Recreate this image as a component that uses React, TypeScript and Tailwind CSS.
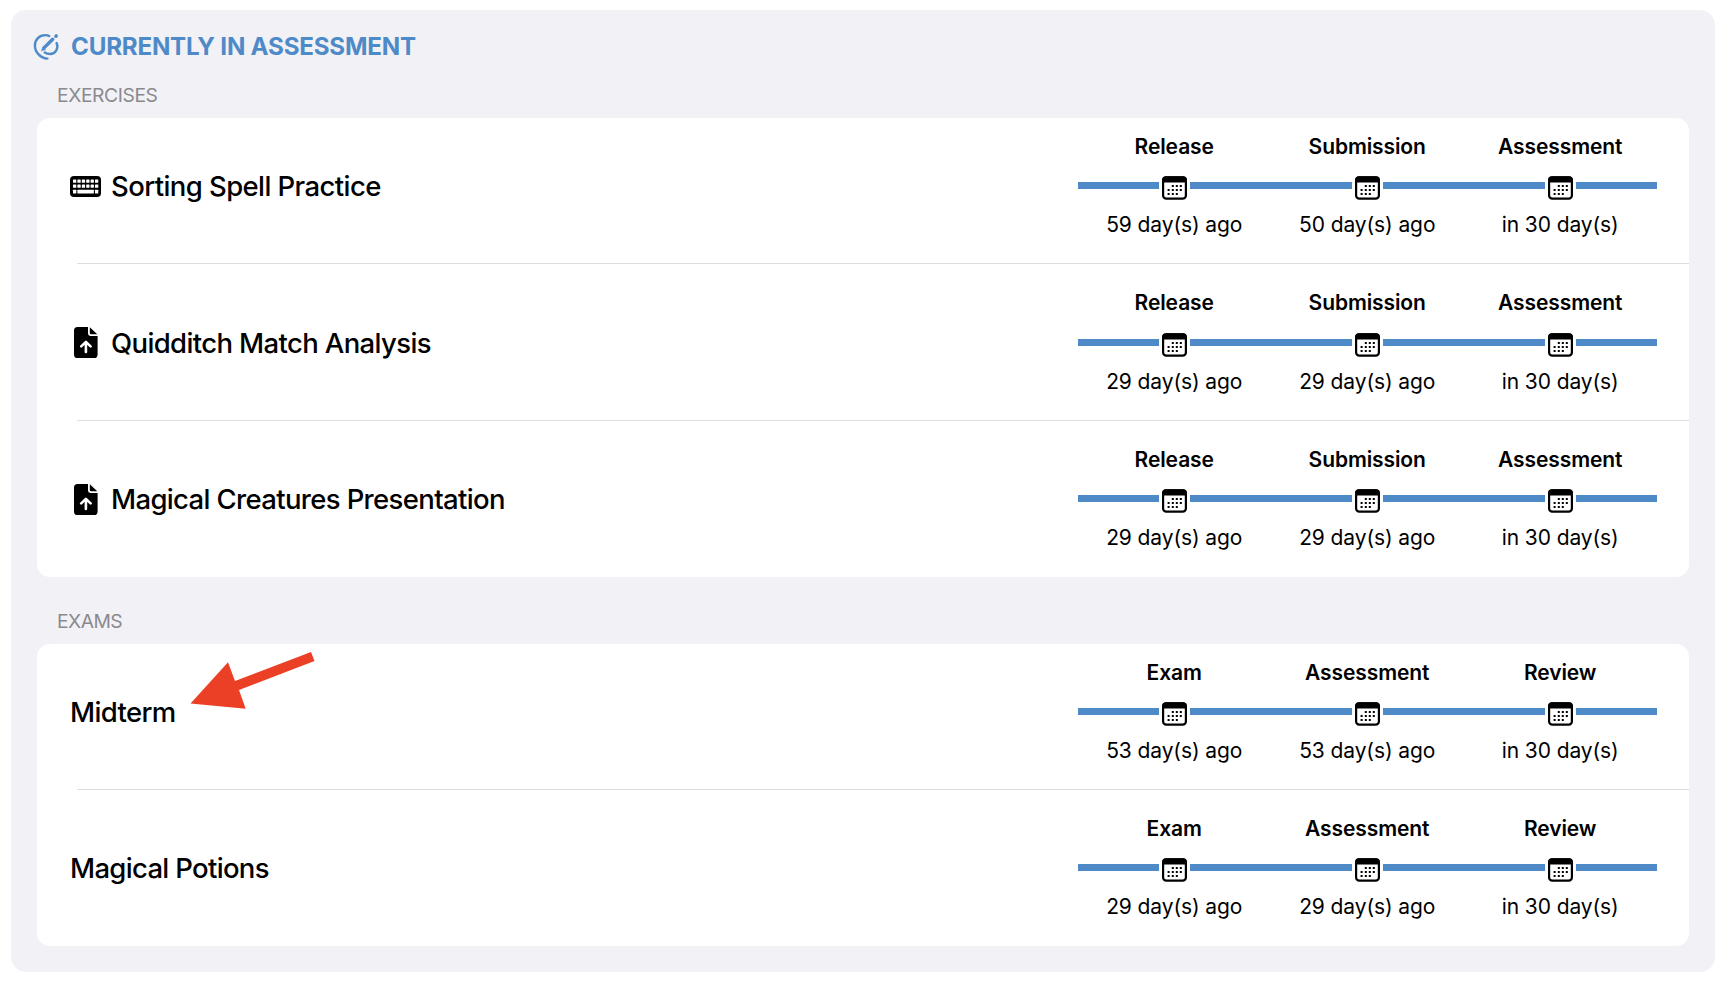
import React from "react";

type Kind = "keyboard" | "file" | null;
type Item = { title: string; tracking: string; kind: Kind; steps: [string, string][] };

const exercises: Item[] = [
  {
    title: "Sorting Spell Practice",
    tracking: "tracking-[-0.59px]",
    kind: "keyboard",
    steps: [["Release", "59 day(s) ago"], ["Submission", "50 day(s) ago"], ["Assessment", "in 30 day(s)"]],
  },
  {
    title: "Quidditch Match Analysis",
    tracking: "tracking-[-0.63px]",
    kind: "file",
    steps: [["Release", "29 day(s) ago"], ["Submission", "29 day(s) ago"], ["Assessment", "in 30 day(s)"]],
  },
  {
    title: "Magical Creatures Presentation",
    tracking: "tracking-[-0.65px]",
    kind: "file",
    steps: [["Release", "29 day(s) ago"], ["Submission", "29 day(s) ago"], ["Assessment", "in 30 day(s)"]],
  },
];

const exams: Item[] = [
  {
    title: "Midterm",
    tracking: "tracking-[-0.65px]",
    kind: null,
    steps: [["Exam", "53 day(s) ago"], ["Assessment", "53 day(s) ago"], ["Review", "in 30 day(s)"]],
  },
  {
    title: "Magical Potions",
    tracking: "tracking-[-0.68px]",
    kind: null,
    steps: [["Exam", "29 day(s) ago"], ["Assessment", "29 day(s) ago"], ["Review", "in 30 day(s)"]],
  },
];

function AssessmentIcon() {
  return (
    <svg width="27" height="28" viewBox="0 0 27 28" fill="none" stroke="#4f8ac8" strokeWidth="2.4" strokeLinecap="round">
      <path d="M16.2 3C14.9 2.3 13.6 2.1 12.2 2.1C6.3 2.1 1.9 6.5 1.9 12.4C1.9 19.2 7.5 25.2 14.4 25.6" />
      <path d="M23.6 10C26 15.6 22.2 21 17.2 21C15.2 21 13.4 20.6 11.8 19.6" />
      <path d="M11.2 14.6L19.7 6.3" strokeWidth="3.4" />
      <path d="M8.6 17.6L9.9 13.9L12.4 16.4Z" fill="#4f8ac8" strokeWidth="0.6" />
      <path d="M22.9 3.3L23.3 2.9" strokeWidth="3.4" />
    </svg>
  );
}

function KeyboardIcon() {
  return (
    <svg width="31" height="21" viewBox="0 0 31 21">
      <rect width="31" height="21" rx="4" fill="#000" />
      <g fill="#fff">
        {[3, 7.4, 11.8, 16.2, 20.6, 25].map((x) => (
          <rect key={x} x={x} y="3.4" width="3.3" height="3.3" rx=".5" />
        ))}
        {[3, 7.4, 11.8, 16.2, 20.6, 25].map((x) => (
          <rect key={x} x={x} y="8.4" width="3.3" height="3.3" rx=".5" />
        ))}
        <rect x="3" y="13.8" width="3.3" height="3.6" rx=".5" />
        <rect x="7.4" y="13.8" width="16.5" height="3.6" rx=".5" />
        <rect x="25" y="13.8" width="3.3" height="3.6" rx=".5" />
      </g>
    </svg>
  );
}

function FileIcon() {
  return (
    <svg width="24" height="31" viewBox="0 0 24 31">
      <path d="M3.6 0H14V6.6Q14 9 16.4 9H23.6V27.4Q23.6 31 20 31H3.6Q0 31 0 27.4V3.6Q0 0 3.6 0Z" />
      <path d="M15.8 0.2L23.3 7.2H17Q15.8 7.2 15.8 6Z" />
      <path d="M11.9 25V15.8M7.2 19.4L11.9 14.9L16.6 19.4" fill="none" stroke="#fff" strokeWidth="2.6" strokeLinecap="round" strokeLinejoin="round" />
    </svg>
  );
}

const dots = [
  [10.8, 10], [14.8, 10], [18.8, 10],
  [6.6, 14], [10.8, 14], [14.8, 14], [18.8, 14],
  [6.6, 18], [10.8, 18], [14.8, 18],
];

function CalendarIcon() {
  return (
    <svg width="25" height="24" viewBox="0 0 25 24">
      <rect x="1.1" y="1.4" width="22.8" height="21.2" rx="3.2" fill="#fff" stroke="#000" strokeWidth="2.2" />
      <path d="M0 6.4V4.1Q0 .3 3.8 .3H21.2Q25 .3 25 4.1V6.4Z" />
      {dots.map(([x, y]) => (
        <rect key={`${x}-${y}`} x={x - 1} y={y - 1} width="2" height="2" />
      ))}
    </svg>
  );
}

function Timeline({ steps }: { steps: [string, string][] }) {
  return (
    <div className="grid w-[579px] shrink-0 grid-cols-3">
      {steps.map(([label, date]) => (
        <div key={label} className="flex flex-col items-center">
          <span className="text-[21px] font-semibold leading-[28px] tracking-[-0.1px]">{label}</span>
          <div className="mt-[15.3px] flex h-[24px] w-full items-center gap-[3px]">
            <div className="mb-[5px] h-[7px] flex-1 bg-[#4f8ac8]" />
            <CalendarIcon />
            <div className="mb-[5px] h-[7px] flex-1 bg-[#4f8ac8]" />
          </div>
          <span className="mt-[11px] text-[21px] leading-[28px] tracking-[-0.1px]">{date}</span>
        </div>
      ))}
    </div>
  );
}

function Card({ items }: { items: Item[] }) {
  return (
    <div className="overflow-hidden rounded-[13px] bg-white">
      {items.map((item, i) => (
        <div key={item.title} className={i === 0 ? "h-[145.17px]" : "h-[156.67px] last:h-[157.17px]"}>
          {i > 0 && <div className="ml-[40.5px] h-px bg-[#dededf]" />}
          <div className={`flex items-center pl-[33.5px] pr-[32.3px] ${i === 0 ? "pt-[14.6px]" : "pt-[25px]"}`}>
            {item.kind && (
              <div className="mr-[10px] flex w-[31px] justify-center">
                {item.kind === "keyboard" ? <KeyboardIcon /> : <FileIcon />}
              </div>
            )}
            <span className={`flex-1 whitespace-nowrap text-[27.5px] font-medium leading-[36px] ${item.tracking}`}>{item.title}</span>
            <Timeline steps={item.steps} />
          </div>
        </div>
      ))}
    </div>
  );
}

export default function App() {
  return (
    <div className="h-[986px] w-[1726px] overflow-hidden bg-white pl-[11px] pt-[10px] font-['Inter',sans-serif] text-black">
      <main className="relative h-[962px] w-[1704px] rounded-[15px] bg-[#f2f1f6] pl-[25.5px] pr-[26px]">
        <header className="-ml-[4px] flex h-[72px] items-center pt-[2px]">
          <AssessmentIcon />
          <h1 className="ml-[11.5px] whitespace-nowrap text-[24.2px] font-bold leading-[32px] tracking-[-0.23px] text-[#4f8ac8]">CURRENTLY IN ASSESSMENT</h1>
        </header>
        <h2 className="h-[36.33px] pl-[20.5px] text-[19.3px] leading-[26px] tracking-[-0.42px] text-[#8a8a8e]">EXERCISES</h2>
        <Card items={exercises} />
        <h2 className="h-[66.67px] pl-[20.5px] pt-[30.3px] text-[19.3px] leading-[26px] tracking-[-0.55px] text-[#8a8a8e]">EXAMS</h2>
        <Card items={exams} />
        <svg className="absolute left-[179px] top-[641px]" width="126" height="60" viewBox="190 651 126 60">
          <path d="M190.5 703.5L228 662.3L235 681L311 652L314.5 661L239 690L245.7 708.8Z" fill="#eb4026" />
        </svg>
      </main>
    </div>
  );
}
